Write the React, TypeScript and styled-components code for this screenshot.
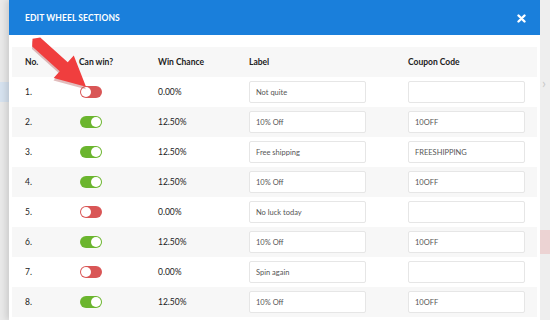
import React from "react";
import styled, { createGlobalStyle } from "styled-components";

const Global = createGlobalStyle`
  html, body { margin: 0; padding: 0; }
  body { font-family: Lato, "Open Sans", sans-serif; background: #ececec; }
`;

const Page = styled.div`
  position: relative;
  width: 550px;
  height: 320px;
  overflow: hidden;
  display: flex;
  background: #ebebeb;
`;

const LeftStrip = styled.div`
  width: 9px;
  flex: none;
  display: flex;
  flex-direction: column;
  background: #e9e9e9;
`;

const LeftBlock = styled.div`
  margin-top: 82px;
  height: 20px;
  background: #d6e2ef;
`;

const RightStrip = styled.div`
  flex: 1;
  display: flex;
  flex-direction: column;
  background: #eeeeee;
  color: #c8c8c8;
  font-size: 14px;
`;

const Chevron = styled.div`
  margin-top: 74px;
  padding-left: 2px;
  height: 20px;
`;

const PinkBlock = styled.div`
  margin-top: 136px;
  height: 24px;
  background: #ecd3d3;
`;

const Modal = styled.div`
  width: 531px;
  flex: none;
  background: #fff;
  box-shadow: -3px 0 6px rgba(0, 0, 0, 0.12);
  display: flex;
  flex-direction: column;
`;

const Header = styled.div`
  height: 35px;
  background: #1a7fdb;
  display: flex;
  align-items: center;
  justify-content: space-between;
  padding: 0 14px 0 16px;
  color: #fff;
`;

const Title = styled.div`
  font-size: 8.5px;
  font-weight: 700;
  letter-spacing: 0.1px;
`;

const CloseIcon = styled.svg`
  display: block;
  margin-top: 1px;
`;

const Body = styled.div`
  padding: 12px 3px 0;
  display: flex;
  flex-direction: column;
`;

const Row = styled.div<{ $shade?: boolean }>`
  display: grid;
  grid-template-columns: 54px 79px 91px 159px 1fr;
  align-items: center;
  height: 30px;
  padding-left: 13px;
  background: ${(p) => (p.$shade ? "#f7f7f7" : "#fff")};
  font-size: 8.5px;
  color: #222;
`;

const HeadCell = styled.div`
  font-weight: 700;
  font-size: 8.5px;
  color: #222;
`;

const Cell = styled.div`
  font-size: 8.5px;
  color: #222;
`;

const Input = styled.div`
  width: 117px;
  height: 22px;
  box-sizing: border-box;
  border: 1px solid #e6e6e6;
  border-radius: 2px;
  background: #fff;
  display: flex;
  align-items: center;
  padding-left: 6px;
  font-size: 7.5px;
  color: #555;
`;

const Toggle = styled.div<{ $on: boolean }>`
  width: 22px;
  height: 12px;
  border-radius: 6px;
  background: ${(p) => (p.$on ? "#6bb52e" : "#d95656")};
  box-sizing: border-box;
  display: flex;
  align-items: center;
  justify-content: ${(p) => (p.$on ? "flex-end" : "flex-start")};
  padding: 0 1px;
  margin-left: 1px;
`;

const Knob = styled.div`
  width: 10px;
  height: 10px;
  border-radius: 50%;
  background: #fff;
`;

const ArrowSvg = styled.svg`
  position: absolute;
  left: 0;
  top: 0;
  pointer-events: none;
`;

const rows = [
  { on: false, chance: "0.00%", label: "Not quite", code: "" },
  { on: true, chance: "12.50%", label: "10% Off", code: "10OFF" },
  { on: true, chance: "12.50%", label: "Free shipping", code: "FREESHIPPING" },
  { on: true, chance: "12.50%", label: "10% Off", code: "10OFF" },
  { on: false, chance: "0.00%", label: "No luck today", code: "" },
  { on: true, chance: "12.50%", label: "10% Off", code: "10OFF" },
  { on: false, chance: "0.00%", label: "Spin again", code: "" },
  { on: true, chance: "12.50%", label: "10% Off", code: "10OFF" },
];

const arrowPts = "3,-6 40,-6 40,-15 70,0 40,15 40,6 3,6 -2,0";

export default function App() {
  return (
    <>
      <Global />
      <Page>
        <LeftStrip>
          <LeftBlock />
        </LeftStrip>
        <Modal>
          <Header>
            <Title>EDIT WHEEL SECTIONS</Title>
            <CloseIcon width="9" height="9" viewBox="0 0 9 9">
              <path d="M1.5 1.5 L7.5 7.5 M7.5 1.5 L1.5 7.5" stroke="#fff" strokeWidth="2.4" strokeLinecap="round" />
            </CloseIcon>
          </Header>
          <Body>
            <Row $shade>
              <HeadCell>No.</HeadCell>
              <HeadCell>Can win?</HeadCell>
              <HeadCell>Win Chance</HeadCell>
              <HeadCell>Label</HeadCell>
              <HeadCell>Coupon Code</HeadCell>
            </Row>
            {rows.map((r, i) => (
              <Row key={i} $shade={i % 2 === 1}>
                <Cell>{i + 1}.</Cell>
                <Cell>
                  <Toggle $on={r.on}>
                    <Knob />
                  </Toggle>
                </Cell>
                <Cell>{r.chance}</Cell>
                <Cell>
                  <Input>{r.label}</Input>
                </Cell>
                <Cell>
                  <Input>{r.code}</Input>
                </Cell>
              </Row>
            ))}
          </Body>
        </Modal>
        <RightStrip>
          <Chevron>›</Chevron>
          <PinkBlock />
        </RightStrip>
        <ArrowSvg width="550" height="320" viewBox="0 0 550 320">
          <g transform="translate(34 40) rotate(42)">
            <polygon points={arrowPts} fill="#9e2323" opacity="0.3" transform="translate(1.5 2)" />
            <polygon points={arrowPts} fill="#f03e3e" />
          </g>
        </ArrowSvg>
      </Page>
    </>
  );
}
